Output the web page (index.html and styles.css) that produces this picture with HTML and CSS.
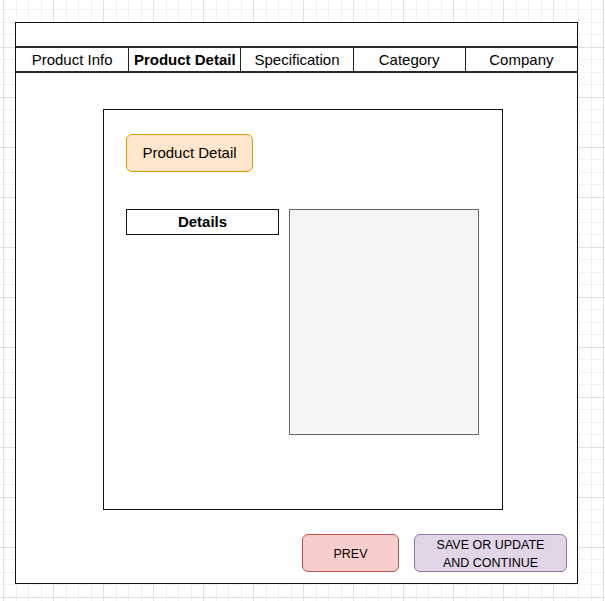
FILE: index.html
```html
<!DOCTYPE html>
<html lang="en">
<head>
<meta charset="utf-8">
<title>Product Detail</title>
<link rel="stylesheet" href="styles.css">
</head>
<body>
<div class="frame">
  <div class="topbar"></div>
  <nav class="tabs">
    <div class="tab">Product Info</div>
    <div class="tab active">Product Detail</div>
    <div class="tab">Specification</div>
    <div class="tab">Category</div>
    <div class="tab">Company</div>
  </nav>
  <section class="panel">
    <div class="title-btn">Product Detail</div>
    <div class="detail-row">
      <div class="details-label">Details</div>
      <div class="image-box"></div>
    </div>
  </section>
  <div class="actions">
    <div class="btn btn-prev">PREV</div>
    <div class="btn btn-save">SAVE OR UPDATE<br>AND CONTINUE</div>
  </div>
</div>
</body>
</html>
```

FILE: styles.css
```css
html {
  background-color: #ffffff;
  background-image:
    repeating-linear-gradient(90deg, transparent -46.7px, #e0e0e0 -46.7px, #e0e0e0 -45.7px, transparent -45.7px, transparent 3.3px),
    repeating-linear-gradient(180deg, transparent -3.3px, #e0e0e0 -3.3px, #e0e0e0 -2.3px, transparent -2.3px, transparent 46.7px),
    repeating-linear-gradient(90deg, transparent -9.2px, #f1f1f1 -9.2px, #f1f1f1 -8.2px, transparent -8.2px, transparent 3.3px),
    repeating-linear-gradient(180deg, transparent -3.3px, #f1f1f1 -3.3px, #f1f1f1 -2.3px, transparent -2.3px, transparent 9.2px);
  min-height: 100%;
}

body {
  margin: 0;
  font-family: "Liberation Sans", Arial, sans-serif;
  color: #000;
}

.frame {
  box-sizing: border-box;
  margin: 22px 0 0 15px;
  width: 563px;
  height: 562px;
  border: 1px solid #111;
  background: #fff;
  display: flex;
  flex-direction: column;
}

.topbar {
  height: 23px;
}

.tabs {
  display: grid;
  grid-template-columns: repeat(5, 1fr);
  border-top: 2px solid #2a2a2a;
  border-bottom: 2px solid #2a2a2a;
  height: 23px;
}

.tab {
  display: flex;
  align-items: center;
  justify-content: center;
  font-size: 15px;
  line-height: 1;
  padding-bottom: 1px;
}

.tab + .tab {
  border-left: 1px solid #222;
}

.tab.active {
  font-weight: bold;
}

.panel {
  box-sizing: border-box;
  margin: 36px 0 0 87px;
  width: 400px;
  height: 401px;
  border: 1px solid #111;
  padding: 24px 0 0 22px;
}

.title-btn {
  box-sizing: border-box;
  width: 127px;
  height: 38px;
  border: 1px solid #d79b00;
  background: #ffe6cc;
  border-radius: 6px;
  display: flex;
  align-items: center;
  justify-content: center;
  font-size: 15px;
  padding-bottom: 1px;
}

.detail-row {
  display: flex;
  align-items: flex-start;
  gap: 10px;
  margin-top: 37px;
}

.details-label {
  box-sizing: border-box;
  width: 153px;
  height: 26px;
  border: 1px solid #111;
  display: flex;
  align-items: center;
  justify-content: center;
  font-size: 15px;
  font-weight: bold;
  padding-bottom: 1px;
}

.image-box {
  box-sizing: border-box;
  width: 190px;
  height: 226px;
  border: 1px solid #666;
  background: #f5f5f5;
}

.actions {
  display: flex;
  justify-content: flex-end;
  gap: 15px;
  margin-top: 24px;
  padding-right: 10px;
}

.btn {
  box-sizing: border-box;
  height: 38px;
  border-radius: 6px;
  display: flex;
  align-items: center;
  justify-content: center;
  text-align: center;
  font-size: 12.5px;
  line-height: 18px;
  padding-top: 2px;
}

.btn-prev {
  width: 97px;
  border: 1px solid #b85450;
  background: #f8cecc;
}

.btn-save {
  width: 153px;
  border: 1px solid #9673a6;
  background: #e1d5e7;
}
```
